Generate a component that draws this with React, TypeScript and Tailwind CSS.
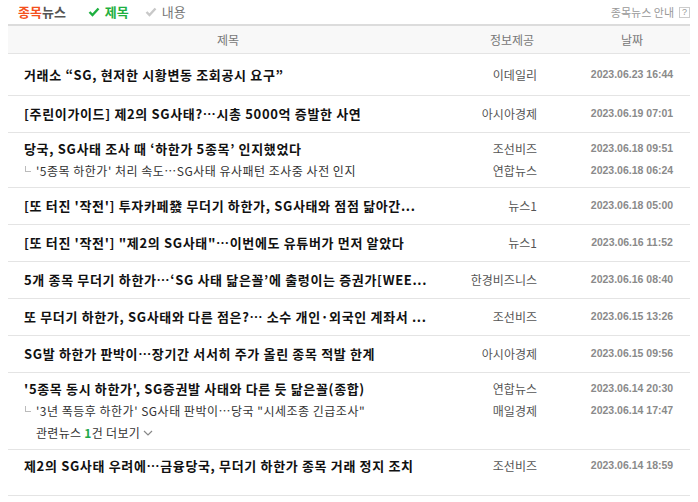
type SubNews = { title: string; provider: string; date: string };

type NewsItem = {
  title: string;
  provider: string;
  date: string;
  subs?: SubNews[];
  more?: number;
};

const news: NewsItem[] = [
  { title: "거래소 “SG, 현저한 시황변동 조회공시 요구”", provider: "이데일리", date: "2023.06.23 16:44" },
  { title: "[주린이가이드] 제2의 SG사태?…시총 5000억 증발한 사연", provider: "아시아경제", date: "2023.06.19 07:01" },
  {
    title: "당국, SG사태 조사 때 ‘하한가 5종목’ 인지했었다",
    provider: "조선비즈",
    date: "2023.06.18 09:51",
    subs: [{ title: "'5종목 하한가' 처리 속도…SG사태 유사패턴 조사중 사전 인지", provider: "연합뉴스", date: "2023.06.18 06:24" }],
  },
  { title: "[또 터진 '작전'] 투자카페發 무더기 하한가, SG사태와 점점 닮아간...", provider: "뉴스1", date: "2023.06.18 05:00" },
  { title: "[또 터진 '작전'] \"제2의 SG사태\"…이번에도 유튜버가 먼저 알았다", provider: "뉴스1", date: "2023.06.16 11:52" },
  { title: "5개 종목 무더기 하한가…‘SG 사태 닮은꼴’에 출렁이는 증권가[WEE...", provider: "한경비즈니스", date: "2023.06.16 08:40" },
  { title: "또 무더기 하한가, SG사태와 다른 점은?… 소수 개인·외국인 계좌서 ...", provider: "조선비즈", date: "2023.06.15 13:26" },
  { title: "SG발 하한가 판박이…장기간 서서히 주가 올린 종목 적발 한계", provider: "아시아경제", date: "2023.06.15 09:56" },
  {
    title: "'5종목 동시 하한가', SG증권발 사태와 다른 듯 닮은꼴(종합)",
    provider: "연합뉴스",
    date: "2023.06.14 20:30",
    subs: [{ title: "'3년 폭등후 하한가' SG사태 판박이…당국 \"시세조종 긴급조사\"", provider: "매일경제", date: "2023.06.14 17:47" }],
    more: 1,
  },
  { title: "제2의 SG사태 우려에…금융당국, 무더기 하한가 종목 거래 정지 조치", provider: "조선비즈", date: "2023.06.14 18:59" },
];

function Check({ color }: { color: string }) {
  return (
    <svg width="12" height="10" viewBox="0 0 12 10" className="shrink-0">
      <path d="M1.5 5 L4.5 8 L10.5 1.5" fill="none" stroke={color} strokeWidth="2.4" />
    </svg>
  );
}

function Line({
  children,
  provider,
  date,
}: {
  children: React.ReactNode;
  provider?: string;
  date?: string;
}) {
  return (
    <div className="flex h-[22px] items-center">
      <div className="w-[440px] pl-[16px] pr-[10px] flex items-center overflow-hidden whitespace-nowrap">
        {children}
      </div>
      <div className="w-[128px] pr-[39px] text-right text-[12px] text-[#555]">{provider}</div>
      <div className="w-[112px] text-center font-['Liberation_Sans',sans-serif] text-[10.5px] font-bold text-[#8a8a8a]">
        {date}
      </div>
    </div>
  );
}

function NewsRow({ item, index, last }: { item: NewsItem; index: number; last: boolean }) {
  const multi = !!item.subs || !!item.more;
  let pad = multi ? "pt-[5px] pb-[5px]" : "py-[7px]";
  if (index === 0) pad = "pt-[10px] pb-[9px]";
  if (last) pad = "pt-[5px] pb-[18px]";
  return (
    <div className={`border-b border-[#e4e4e4] ${pad}`}>
      <Line provider={item.provider} date={item.date}>
        <span className="text-[13px] font-bold tracking-[0.65px] text-[#111]">{item.title}</span>
      </Line>
      {item.subs?.map((s) => (
        <Line key={s.title} provider={s.provider} date={s.date}>
          <span className="ml-[1px] mr-[5px] mb-[5px] h-[6px] w-[6px] border-b border-l border-[#bbb]" />
          <span className="text-[12px] tracking-[0.5px] text-[#333]">{s.title}</span>
        </Line>
      ))}
      {item.more ? (
        <Line>
          <span className="pl-[12px] text-[12px] tracking-[0.3px] text-[#333]">
            관련뉴스 <span className="font-bold text-[#1ea84a]">{item.more}</span>건 더보기
          </span>
          <svg width="10" height="6" viewBox="0 0 10 6" className="ml-[3px]">
            <path d="M1 1 L5 5 L9 1" fill="none" stroke="#888" strokeWidth="1.2" />
          </svg>
        </Line>
      ) : null}
    </div>
  );
}

export default function App() {
  return (
    <div className="w-[698px] h-[502px] bg-white px-[8px] font-['Noto_Sans_CJK_KR',sans-serif] overflow-hidden">
      <div className="flex h-[24px] items-center justify-between">
        <div className="flex items-center pl-[10px] text-[13px]">
          <span className="font-bold text-[#f4511e]">종목</span>
          <span className="font-bold text-[#555]">뉴스</span>
          <span className="ml-[22px] flex items-center gap-[5px] font-bold text-[#1eb040]">
            <Check color="#1eb040" />
            제목
          </span>
          <span className="ml-[16px] flex items-center gap-[5px] text-[#777]">
            <Check color="#c8c8c8" />
            내용
          </span>
        </div>
        <div className="flex items-center gap-[5px] text-[11px] text-[#999]">
          종목뉴스 안내
          <span className="flex h-[11px] w-[11px] items-center justify-center border border-[#ccc] font-['Liberation_Sans',sans-serif] text-[9px] leading-none text-[#999]">
            ?
          </span>
        </div>
      </div>

      <div className="border-t-2 border-[#dcdcdc]">
        <div className="flex h-[28px] items-center border-b border-[#e4e4e4] bg-[#f8f8f8] text-[12px] text-[#777]">
          <div className="w-[440px] text-center">제목</div>
          <div className="w-[128px] text-center">정보제공</div>
          <div className="w-[112px] text-center">날짜</div>
        </div>
        {news.map((item, i) => (
          <NewsRow key={item.title} item={item} index={i} last={i === news.length - 1} />
        ))}
      </div>
    </div>
  );
}
